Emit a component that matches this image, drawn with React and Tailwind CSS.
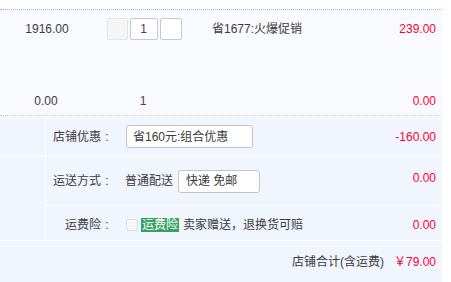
export default function App() {
  const font = "font-['Liberation_Sans','Noto_Sans_CJK_SC',sans-serif]";
  const Colon = () => <span className="inline-block w-[12px] text-center">:</span>;
  return (
    <div className={`w-[451px] h-[282px] bg-white text-[12px] leading-[14px] text-[#3c3c3c] ${font}`}>
      <div className="w-[442px] pt-[9px]">
        {/* item row */}
        <div className="border-t border-b border-dotted border-t-[#9fb4da] border-b-[#c9c9c9] bg-[#f8fafe] pt-[8px] pb-[7px]">
          <div className="flex h-[22px] items-center">
            <div className="w-[94px] text-center">1916.00</div>
            <div className="w-[100px] flex justify-center gap-[2px]">
              <div className="w-[21px] h-[22px] rounded-[2px] border border-[#e4e4e6] bg-[#f5f5f6]" />
              <div className="w-[28px] h-[22px] rounded-[2px] border border-[#c8c8ce] bg-white flex items-center justify-center text-[#5a3276]">1</div>
              <div className="w-[22px] h-[22px] rounded-[2px] border border-[#c8c8ce] bg-white" />
            </div>
            <div className="flex-1 pl-[18px]">省1677:火爆促销</div>
            <div className="pr-[6px] text-[#ff0036]">239.00</div>
          </div>
          <div className="flex h-[14px] items-center mt-[54px]">
            <div className="w-[92px] text-center">0.00</div>
            <div className="w-[102px] text-center text-[#5a3276]">1</div>
            <div className="flex-1" />
            <div className="pr-[6px] text-[#ff0036]">0.00</div>
          </div>
        </div>
        <div className="h-px" />
        {/* discounts */}
        <div className="flex bg-[#f1f5fd] border-b border-white">
          <div className="w-[46px] border-r border-white flex flex-col">
            <div className="h-[40px] border-b border-white" />
            <div className="flex-1" />
          </div>
          <div className="flex-1 flex flex-col">
            <div className="h-[40px] border-b border-white flex items-center">
              <div className="w-[67px] text-right">店铺优惠<Colon /></div>
              <div className="ml-[13px] w-[127px] h-[23px] rounded-[3px] border border-[#c3c3c8] bg-white flex items-center pl-[6px]">省160元:组合优惠</div>
              <div className="flex-1" />
              <div className="pr-[6px] text-[#ff0036]">-160.00</div>
            </div>
            <div className="h-[49px] border-b border-white flex items-center">
              <div className="w-[67px] text-right">运送方式<Colon /></div>
              <div className="ml-[12px]">普通配送</div>
              <div className="ml-[5px] w-[82px] h-[23px] rounded-[3px] border border-[#c3c3c8] bg-white flex items-center pl-[7px]">快递 免邮</div>
              <div className="flex-1" />
              <div className="pr-[6px] pb-[7px] text-[#ff0036]">0.00</div>
            </div>
            <div className="h-[34px] pt-[4px] flex items-center">
              <div className="w-[67px] text-right">运费险<Colon /></div>
              <div className="ml-[13px] w-[12px] h-[12px] rounded-[2px] border border-[#dadde3] bg-[#f6f7f9]" />
              <div className="ml-[3px] w-[38px] h-[14px] bg-[#37a264] text-white flex items-center justify-center">运费险</div>
              <div className="ml-[4px]">卖家赠送，退换货可赔</div>
              <div className="flex-1" />
              <div className="pr-[6px] text-[#ff0036]">0.00</div>
            </div>
          </div>
        </div>
        {/* total */}
        <div className="h-[41px] bg-[#f1f5fd] flex items-center justify-end pr-[6px]">
          <div>店铺合计(含运费)</div>
          <div className="ml-[10px] text-[#ff0036]">￥79.00</div>
        </div>
      </div>
    </div>
  );
}
